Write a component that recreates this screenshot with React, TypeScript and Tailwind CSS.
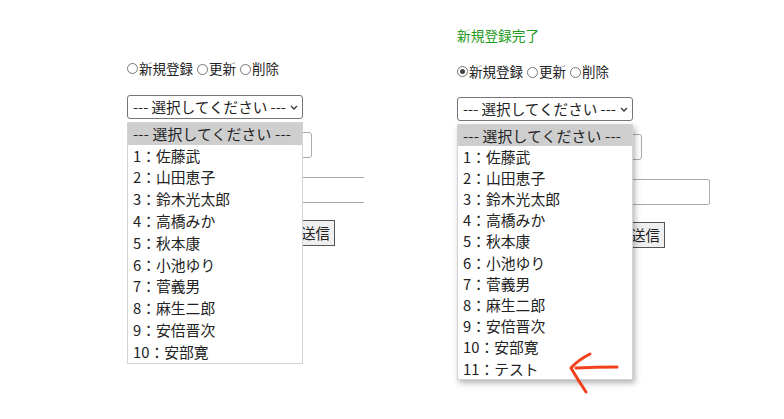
const users = [
  '1：佐藤武',
  '2：山田恵子',
  '3：鈴木光太郎',
  '4：高橋みか',
  '5：秋本康',
  '6：小池ゆり',
  '7：菅義男',
  '8：麻生二郎',
  '9：安倍晋次',
  '10：安部寛',
];

const font = { fontFamily: '"Noto Sans CJK JP", "Noto Sans", sans-serif' };

function Radio({ checked }: { checked?: boolean }) {
  return (
    <span className="inline-flex items-center justify-center w-[11px] h-[11px] rounded-full border border-[#767676] mr-[1px] align-[-1px]">
      {checked && <span className="w-[5px] h-[5px] rounded-full bg-[#444]" />}
    </span>
  );
}

function RadioRow({ checked }: { checked?: boolean }) {
  return (
    <div className="h-[20px] flex items-center text-[13.5px] text-[#222] whitespace-nowrap">
      <Radio checked={checked} />
      <span>新規登録</span>
      <span className="ml-[4px]"><Radio /></span>
      <span>更新</span>
      <span className="ml-[4px]"><Radio /></span>
      <span>削除</span>
    </div>
  );
}

function SelectBox() {
  return (
    <div className="w-[176px] h-[24px] border border-[#767676] rounded-[3px] flex items-center justify-between pl-[5px] pr-[4px] text-[14.6px] text-[#222] whitespace-nowrap">
      <span>--- 選択してください ---</span>
      <svg width="8" height="5" viewBox="0 0 8 5" className="ml-[3px] shrink-0">
        <path d="M1 1 L4 4 L7 1" fill="none" stroke="#333" strokeWidth="1.3" />
      </svg>
    </div>
  );
}

function OptionList({ items, rowH, shadow }: { items: string[]; rowH: string; shadow?: boolean }) {
  return (
    <div
      className={`absolute left-0 w-[176px] bg-white border border-[#d4d4d4] text-[14.8px] text-[#222] ${
        shadow ? 'shadow-[2px_3px_6px_rgba(0,0,0,0.3)]' : ''
      }`}
    >
      <div className={`${rowH} flex items-center pl-[5px] bg-[#cecece] whitespace-nowrap tracking-[0.2px]`}>
        --- 選択してください ---
      </div>
      {items.map((u) => (
        <div key={u} className={`${rowH} flex items-center pl-[5px] whitespace-nowrap`}>
          {u}
        </div>
      ))}
    </div>
  );
}

function FormBody({ wide }: { wide?: boolean }) {
  return (
    <div className="flex flex-col">
      <div className="ml-[60px] mt-[13px] w-[125px] h-[26px] border border-[#aaa] rounded-[3px]" />
      <div
        className={`ml-[60px] mt-[19px] h-[26px] border border-[#aaa] rounded-[2px] ${
          wide ? 'w-[193px]' : 'w-[220px]'
        }`}
      />
      <div className="ml-[160px] mt-[17px] w-[48px] h-[26px] border border-[#555] bg-[#efefef] flex items-center justify-end pr-[4px] text-[14.5px] text-[#222]">
        送信
      </div>
    </div>
  );
}

export default function App() {
  return (
    <div className="relative w-[784px] h-[419px] bg-white overflow-hidden" style={font}>
      <div className="flex">
        {/* left capture, clipped at its right edge */}
        <div className="ml-[127px] w-[237px] h-[419px] overflow-hidden pt-[58px]">
          <RadioRow />
          <div className="mt-[17px]">
            <SelectBox />
          </div>
          <div className="relative">
            <div className="absolute top-[3px] left-0 w-full">
              <OptionList items={users} rowH="h-[21.8px]" />
            </div>
            <FormBody />
          </div>
        </div>

        {/* right capture */}
        <div className="ml-[93px] w-[300px] pt-[25px]">
          <div className="h-[20px] flex items-center text-[13.7px] text-[#1f9b22]">新規登録完了</div>
          <div className="mt-[16px]">
            <RadioRow checked />
          </div>
          <div className="mt-[16px]">
            <SelectBox />
          </div>
          <div className="relative">
            <div className="absolute top-[3px] left-0 w-full">
              <OptionList items={[...users, '11：テスト']} rowH="h-[21.2px]" shadow />
            </div>
            <FormBody wide />
          </div>
        </div>
      </div>

      {/* red annotation arrow */}
      <svg className="absolute left-0 top-0 pointer-events-none" width="784" height="419">
        <path d="M576 368 Q596 367 617 367" fill="none" stroke="#f2401c" strokeWidth="3" strokeLinecap="round" />
        <path d="M590 354 Q578 360 571 368 Q578 380 586 392" fill="none" stroke="#f2401c" strokeWidth="3" strokeLinecap="round" strokeLinejoin="round" />
      </svg>
    </div>
  );
}
